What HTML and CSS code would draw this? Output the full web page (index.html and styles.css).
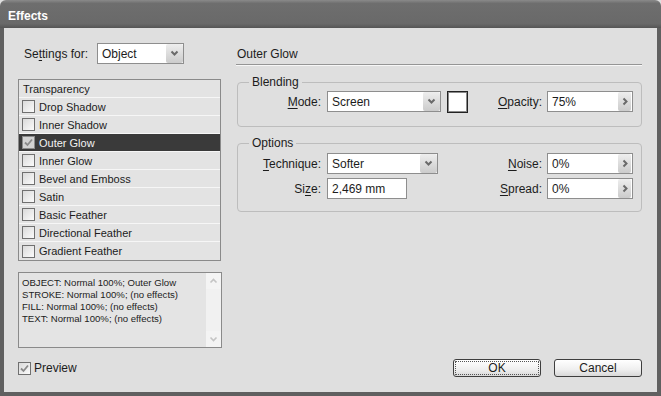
FILE: index.html
```html
<!DOCTYPE html>
<html>

<head>
    <meta charset="UTF-8">
    <meta name="viewport" content="width=device-width, initial-scale=1.0">
    <title>Effects</title>
    <link rel="stylesheet" href="styles.css">
</head>

<body>
    <div class="dialog">
        <div class="titlebar">Effects</div>
        <div class="content">
            <!-- Left column: effect list and summary -->
            <div class="left">
                <div class="settings">
                    <span class="settings-label">Se<u>t</u>tings for:</span>
                    <div class="select settings-select">
                        <span class="value">Object</span>
                        <span class="drop">
                            <svg width="9" height="7" viewBox="0 0 9 7"><polyline points="1.5,1.5 4.5,4.5 7.5,1.5" fill="none" stroke="#6a6a6a" stroke-width="2"/></svg>
                        </span>
                    </div>
                </div>
                <ul class="effects-list">
                    <li class="effect head">Transparency</li>
                    <li class="effect"><span class="check"></span>Drop Shadow</li>
                    <li class="effect"><span class="check"></span>Inner Shadow</li>
                    <li class="effect selected">
                        <span class="check checked">
                            <svg width="11" height="11" viewBox="0 0 11 11"><polyline points="2,5.5 4.5,8 9,2.5" fill="none" stroke="#8a8a8a" stroke-width="1.8"/></svg>
                        </span>Outer Glow
                    </li>
                    <li class="effect"><span class="check"></span>Inner Glow</li>
                    <li class="effect"><span class="check"></span>Bevel and Emboss</li>
                    <li class="effect"><span class="check"></span>Satin</li>
                    <li class="effect"><span class="check"></span>Basic Feather</li>
                    <li class="effect"><span class="check"></span>Directional Feather</li>
                    <li class="effect"><span class="check"></span>Gradient Feather</li>
                </ul>
                <div class="summary">
                    <div class="summary-text">
                        OBJECT: Normal 100%; Outer Glow<br>
                        STROKE: Normal 100%; (no effects)<br>
                        FILL: Normal 100%; (no effects)<br>
                        TEXT: Normal 100%; (no effects)
                    </div>
                    <div class="scrollbar">
                        <span class="scroll-btn">
                            <svg width="9" height="6" viewBox="0 0 9 6"><polyline points="1.5,4.5 4.5,1.5 7.5,4.5" fill="none" stroke="#c4c4c4" stroke-width="1.6"/></svg>
                        </span>
                        <span class="scroll-btn">
                            <svg width="9" height="6" viewBox="0 0 9 6"><polyline points="1.5,1.5 4.5,4.5 7.5,1.5" fill="none" stroke="#c4c4c4" stroke-width="1.6"/></svg>
                        </span>
                    </div>
                </div>
                <div class="preview">
                    <span class="check">
                        <svg width="11" height="11" viewBox="0 0 11 11"><polyline points="2,5.5 4.5,8 9,2.5" fill="none" stroke="#8a8a8a" stroke-width="1.8"/></svg>
                    </span>
                    <span>Preview</span>
                </div>
            </div>

            <!-- Right column: settings of the selected effect -->
            <div class="right">
                <div class="section-title">Outer Glow</div>

                <fieldset class="group blending">
                    <legend>Blending</legend>
                    <div class="row">
                        <span class="lbl"><u>M</u>ode:</span>
                        <div class="select mode-select">
                            <span class="value">Screen</span>
                            <span class="drop">
                                <svg width="9" height="7" viewBox="0 0 9 7"><polyline points="1.5,1.5 4.5,4.5 7.5,1.5" fill="none" stroke="#6a6a6a" stroke-width="2"/></svg>
                            </span>
                        </div>
                        <span class="swatch"></span>
                        <span class="lbl-right"><u>O</u>pacity:</span>
                        <div class="field spin">
                            <span class="value">75%</span>
                            <span class="spin-btn">
                                <svg width="6" height="9" viewBox="0 0 6 9"><polyline points="1.5,1.5 4.5,4.5 1.5,7.5" fill="none" stroke="#6a6a6a" stroke-width="2"/></svg>
                            </span>
                        </div>
                    </div>
                </fieldset>

                <fieldset class="group options">
                    <legend>Options</legend>
                    <div class="row">
                        <span class="lbl"><u>T</u>echnique:</span>
                        <div class="select technique-select">
                            <span class="value">Softer</span>
                            <span class="drop">
                                <svg width="9" height="7" viewBox="0 0 9 7"><polyline points="1.5,1.5 4.5,4.5 7.5,1.5" fill="none" stroke="#6a6a6a" stroke-width="2"/></svg>
                            </span>
                        </div>
                        <span class="lbl-right"><u>N</u>oise:</span>
                        <div class="field spin">
                            <span class="value">0%</span>
                            <span class="spin-btn">
                                <svg width="6" height="9" viewBox="0 0 6 9"><polyline points="1.5,1.5 4.5,4.5 1.5,7.5" fill="none" stroke="#6a6a6a" stroke-width="2"/></svg>
                            </span>
                        </div>
                    </div>
                    <div class="row">
                        <span class="lbl">Si<u>z</u>e:</span>
                        <div class="field size-field">
                            <span class="value">2,469 mm</span>
                        </div>
                        <span class="lbl-right"><u>S</u>pread:</span>
                        <div class="field spin">
                            <span class="value">0%</span>
                            <span class="spin-btn">
                                <svg width="6" height="9" viewBox="0 0 6 9"><polyline points="1.5,1.5 4.5,4.5 1.5,7.5" fill="none" stroke="#6a6a6a" stroke-width="2"/></svg>
                            </span>
                        </div>
                    </div>
                </fieldset>

                <div class="buttons">
                    <button class="btn default">OK</button>
                    <button class="btn">Cancel</button>
                </div>
            </div>
        </div>
    </div>
</body>

</html>
```

FILE: styles.css
```css
/* Reset styles */
* {
    margin: 0;
    padding: 0;
    box-sizing: border-box;
}

body {
    font-family: "Liberation Sans", Arial, sans-serif;
    font-size: 12px;
    color: #1c1c1c;
    background-color: #fff;
}

u {
    text-decoration-thickness: 1px;
    text-underline-offset: 2px;
}

/* Window frame */
.dialog {
    width: 661px;
    height: 396px;
    display: flex;
    flex-direction: column;
    background-color: #dfdfdf;
}

.titlebar {
    height: 28px;
    flex-shrink: 0;
    display: flex;
    align-items: center;
    padding: 3px 0 0 8px;
    color: #fff;
    font-weight: bold;
    font-size: 12px;
    background: linear-gradient(#8a8a8a, #6e6e6e 12%, #696969 85%, #555);
    border-radius: 6px 6px 0 0;
}

.content {
    flex: 1;
    display: flex;
    gap: 14px;
    padding: 15px 15px 15px 14px;
    border: 4px solid #606060;
    border-top: none;
}

/* Left column */
.left {
    width: 204px;
    display: flex;
    flex-direction: column;
}

.settings {
    display: flex;
    align-items: center;
    height: 21px;
    padding-left: 6px;
}

.settings-label {
    width: 73px;
}

.select,
.field {
    height: 21px;
    display: flex;
    align-items: center;
    justify-content: space-between;
    padding-left: 4px;
    background-color: #fff;
    border: 1px solid #8e8e8e;
}

.settings-select {
    width: 87px;
}

.drop {
    width: 17px;
    height: 19px;
    display: flex;
    align-items: center;
    justify-content: center;
    background: linear-gradient(#eeeeee, #cbcbcb);
    border-radius: 2px;
}

.effects-list {
    list-style: none;
    margin-top: 15px;
    width: 203px;
    background-color: #e3e3e3;
    border: 1px solid #8a8a8a;
}

.effect {
    height: 18px;
    display: flex;
    align-items: center;
    gap: 4px;
    padding-left: 3px;
    font-size: 11px;
    border-bottom: 1px solid #f6f6f6;
}

.effect:last-child {
    border-bottom: none;
}

.effect.head {
    padding-left: 4px;
}

.effect.selected {
    background-color: #3a3a3a;
    color: #f2f2f2;
}

.check {
    width: 13px;
    height: 13px;
    flex-shrink: 0;
    display: flex;
    align-items: center;
    justify-content: center;
    border: 1px solid #707070;
    background: linear-gradient(135deg, #dadada, #fbfbfb);
}

.check.checked {
    background: #d2d2d2;
    border-color: #8a8a8a;
}

.summary {
    margin-top: 11px;
    height: 76px;
    display: flex;
    background-color: #e4e4e4;
    border: 1px solid #8a8a8a;
}

.summary-text {
    flex: 1;
    padding: 4px 3px;
    font-size: 9.6px;
    line-height: 12px;
}

.scrollbar {
    width: 15px;
    display: flex;
    flex-direction: column;
    justify-content: space-between;
    background-color: #f1f1f1;
}

.scroll-btn {
    height: 16px;
    display: flex;
    align-items: center;
    justify-content: center;
    background-color: #f4f4f4;
}

.preview {
    margin-top: 13px;
    display: flex;
    align-items: center;
    gap: 3px;
}

/* Right column */
.right {
    flex: 1;
    display: flex;
    flex-direction: column;
}

.section-title {
    height: 22px;
    display: flex;
    align-items: center;
    padding-left: 1px;
    border-bottom: 1px solid #959595;
    box-shadow: 0 1px 0 #f7f7f7;
}

.group {
    margin-left: 1px;
    border: 1px solid #bdbdbd;
    border-radius: 4px;
    padding: 0 8px 0 0;
}

.group legend {
    margin-left: 11px;
    padding: 0 3px;
    line-height: 14px;
}

.blending {
    margin-top: 10px;
    padding-top: 2px;
    padding-bottom: 14px;
}

.options {
    margin-top: 9px;
    padding-top: 3px;
    padding-bottom: 12px;
}

.row {
    height: 21px;
    display: flex;
    align-items: center;
}

.row + .row {
    margin-top: 4px;
}

.lbl {
    width: 83px;
    margin-right: 6px;
    text-align: right;
}

.lbl-right {
    margin-left: auto;
    margin-right: 5px;
}

.mode-select {
    width: 114px;
}

.technique-select {
    width: 111px;
}

.size-field {
    width: 80px;
}

.swatch {
    width: 21px;
    height: 22px;
    margin-left: 6px;
    background-color: #fff;
    border: 1px solid #222;
    box-shadow: inset 0 0 0 1px #8a8a8a;
}

.spin {
    width: 86px;
    padding-right: 1px;
}

.spin-btn {
    width: 13px;
    height: 19px;
    display: flex;
    align-items: center;
    justify-content: center;
    background: linear-gradient(#eeeeee, #cbcbcb);
    border-radius: 2px;
}

.buttons {
    margin-top: auto;
    display: flex;
    justify-content: flex-end;
    gap: 13px;
}

.btn {
    width: 88px;
    height: 18px;
    font-family: "Liberation Sans", Arial, sans-serif;
    font-size: 12px;
    color: #1c1c1c;
    border: 1px solid #3e3e3e;
    border-radius: 3px;
    background: linear-gradient(#ffffff, #efefef 60%, #d8d8d8);
}

.btn.default {
    outline: 1px dotted #555;
    outline-offset: -3px;
}
```
